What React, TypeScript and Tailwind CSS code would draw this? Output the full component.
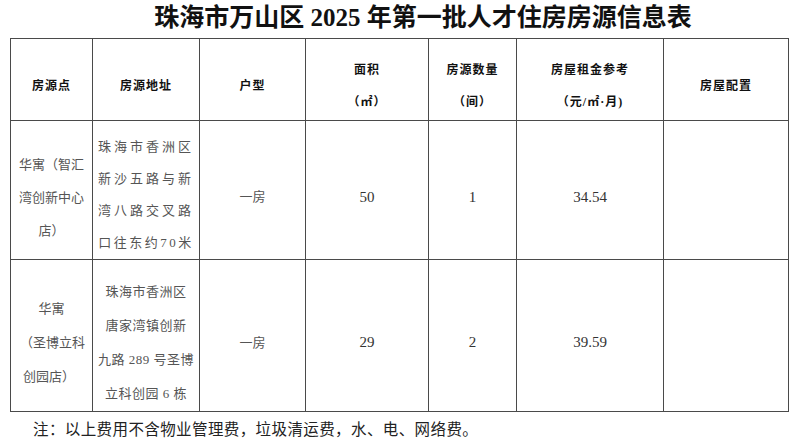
const FONT = "font-['Liberation_Serif','Noto_Sans_CJK_SC',serif]"

const COLS = [82, 107, 106, 123, 88, 147, 125]

type Row = {
  site: React.ReactNode
  address: { text: string; cls?: string }[]
  addressClass: string
  type: string
  area: string
  count: string
  rent: string
  height: string
}

const ROWS: Row[] = [
  {
    site: (
      <div className="px-[7px] text-center leading-[33px]">
        <div>华寓（智汇</div>
        <div>湾创新中心</div>
        <div>店）</div>
      </div>
    ),
    address: [
      { text: '珠海市香洲区' },
      { text: '新沙五路与新' },
      { text: '湾八路交叉路' },
      { text: '口往东约70米', cls: 'tracking-[2.5px]' },
    ],
    addressClass: 'pt-[10px] tracking-[3px] leading-[32px]',
    type: '一房',
    area: '50',
    count: '1',
    rent: '34.54',
    height: 'h-[138px]',
  },
  {
    site: (
      <div className="pl-[12px] text-left leading-[34px]">
        <div className="pr-[12px] text-center">华寓</div>
        <div className="-ml-[3px]">（圣博立科</div>
        <div>创园店）</div>
      </div>
    ),
    address: [
      { text: '珠海市香洲区' },
      { text: '唐家湾镇创新' },
      { text: '九路 289 号圣博' },
      { text: '立科创园 6 栋' },
    ],
    addressClass: 'pt-[14px] tracking-[0.5px] leading-[34px]',
    type: '一房',
    area: '29',
    count: '2',
    rent: '39.59',
    height: 'h-[152px]',
  },
]

function HeadCell({ lines }: { lines: string[] }) {
  return (
    <th className="border border-[#4a4a4a] p-0 pt-[12px] align-middle font-bold">
      <div className="flex flex-col items-center gap-[14px] text-[12px] leading-[18px] tracking-[1px] text-[#111] whitespace-nowrap">
        {lines.map((l) => (
          <span key={l}>{l}</span>
        ))}
      </div>
    </th>
  )
}

export default function App() {
  return (
    <div className={`w-[800px] h-[444px] overflow-hidden bg-white ${FONT}`}>
      <h1 className="h-[38px] pl-[46px] pt-[3px] text-center text-[25px] leading-[30px] font-bold text-[#111]">
        珠海市万山区 2025 年第一批人才住房房源信息表
      </h1>

      <table className="ml-[10px] w-[778px] table-fixed border-collapse">
        <colgroup>
          {COLS.map((w, i) => (
            <col key={i} style={{ width: w }} />
          ))}
        </colgroup>
        <thead>
          <tr className="h-[82px]">
            <HeadCell lines={['房源点']} />
            <HeadCell lines={['房源地址']} />
            <HeadCell lines={['户型']} />
            <HeadCell lines={['面积', '（㎡）']} />
            <HeadCell lines={['房源数量', '（间）']} />
            <HeadCell lines={['房屋租金参考', '（元/㎡·月)']} />
            <HeadCell lines={['房屋配置']} />
          </tr>
        </thead>
        <tbody className="text-[13px] text-[#555] whitespace-nowrap">
          {ROWS.map((r, i) => (
            <tr key={i} className={r.height}>
              <td className="border border-[#4a4a4a] p-0 pt-[14px] align-middle">{r.site}</td>
              <td className="border border-[#4a4a4a] p-0 align-middle">
                <div className={`text-center ${r.addressClass}`}>
                  {r.address.map((l) => (
                    <div key={l.text} className={l.cls}>
                      {l.text}
                    </div>
                  ))}
                </div>
              </td>
              <td className="border border-[#4a4a4a] p-0 pt-[14px] text-center align-middle">{r.type}</td>
              <td className="border border-[#4a4a4a] p-0 pt-[14px] text-center align-middle text-[15px] text-[#333]">
                {r.area}
              </td>
              <td className="border border-[#4a4a4a] p-0 pt-[14px] text-center align-middle text-[15px] text-[#333]">
                {r.count}
              </td>
              <td className="border border-[#4a4a4a] p-0 pt-[14px] text-center align-middle text-[15px] text-[#333]">
                {r.rent}
              </td>
              <td className="border border-[#4a4a4a] p-0" />
            </tr>
          ))}
        </tbody>
      </table>

      <p className="mt-[7px] pl-[33px] text-[15.5px] leading-[22px] tracking-[0.4px] text-[#222]">
        注：以上费用不含物业管理费，垃圾清运费，水、电、网络费。
      </p>
    </div>
  )
}
